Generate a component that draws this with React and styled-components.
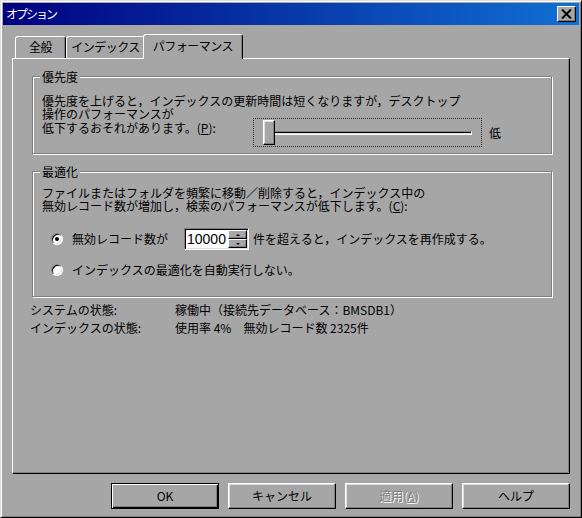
import React from 'react'
import styled, { createGlobalStyle } from 'styled-components'

const face = '#a6a6a6'

const GlobalStyle = createGlobalStyle`
  html, body {
    margin: 0;
    padding: 0;
    background: ${face};
  }
  body {
    font-family: "Noto Sans CJK JP", "Noto Sans", sans-serif;
    font-size: 12px;
    color: #000;
  }
`

const Window = styled.div`
  box-sizing: border-box;
  width: 582px;
  height: 518px;
  background: ${face};
  border: 1px solid;
  border-color: #dfdfdf #000 #000 #dfdfdf;
  box-shadow: inset 1px 1px #fff, inset -1px -1px #808080;
  padding: 2px;
  display: flex;
  flex-direction: column;
`
const TitleBar = styled.div`
  height: 22px;
  display: flex;
  align-items: center;
  justify-content: space-between;
  padding: 0 3px 0 3px;
  background: linear-gradient(to right, #000080, #1070d4);
`
const TitleText = styled.span`
  color: #fff;
  font-size: 12px;
  letter-spacing: -2px;
  line-height: 14px;
`
const CloseButton = styled.div`
  box-sizing: border-box;
  width: 19px;
  height: 16px;
  display: flex;
  align-items: center;
  justify-content: center;
  background: ${face};
  border: 1px solid;
  border-color: #fff #000 #000 #fff;
  box-shadow: inset -1px -1px #808080;
`
const Body = styled.div`
  flex: 1;
  display: flex;
  flex-direction: column;
  padding: 9px 9px 0 9px;
`
const TabStrip = styled.div`
  height: 24px;
  display: flex;
  align-items: flex-end;
  padding-left: 3px;
`
const Tab = styled.div`
  box-sizing: border-box;
  width: ${p => p.$width}px;
  height: ${p => (p.$active ? 25 : 22)}px;
  margin-left: ${p => (p.$active ? -2 : 0)}px;
  margin-bottom: ${p => (p.$active ? -1 : 0)}px;
  position: relative;
  z-index: ${p => (p.$active ? 2 : 0)};
  background: ${face};
  border-left: 1px solid #fff;
  border-top: 1px solid #fff;
  border-right: 1px solid #000;
  border-radius: 3px 3px 0 0;
  box-shadow: inset -1px 0 #808080;
  display: flex;
  align-items: center;
  justify-content: center;
  padding-bottom: ${p => (p.$active ? 3 : 1)}px;
  line-height: 14px;
  letter-spacing: -0.5px;
  white-space: nowrap;
`
const Panel = styled.div`
  box-sizing: border-box;
  height: 416px;
  border-left: 1px solid #fff;
  border-top: 1px solid #fff;
  border-right: 1px solid #000;
  border-bottom: 1px solid #000;
  box-shadow: inset -1px -1px #808080;
  padding: 17px 17px 0 19px;
  display: flex;
  flex-direction: column;
`
const Group = styled.div`
  position: relative;
  box-sizing: border-box;
  height: ${p => p.$height}px;
  margin-top: ${p => p.$top || 0}px;
  border: 1px solid #808080;
  box-shadow: 1px 1px #fff, inset 1px 1px #fff;
  padding: ${p => p.$padTop}px 9px 0 9px;
`
const GroupTitle = styled.span`
  position: absolute;
  top: -7px;
  left: 7px;
  padding: 0 2px;
  background: ${face};
  line-height: 14px;
`
const Line = styled.div`
  line-height: ${p => p.$lh || 13}px;
  white-space: nowrap;
`
const SliderRow = styled.div`
  display: flex;
  align-items: flex-start;
`
const SliderLabel = styled.div`
  width: 211px;
  line-height: 14px;
  white-space: nowrap;
`
const SliderFrame = styled.div`
  position: relative;
  box-sizing: border-box;
  width: 229px;
  height: 29px;
  margin-top: 11px;
  border: 1px dotted #303030;
  padding: 0 9px 0 9px;
  display: flex;
  align-items: center;
`
const Track = styled.div`
  flex: 1;
  box-sizing: border-box;
  height: 4px;
  border: 1px solid;
  border-color: #808080 #fff #fff #808080;
  box-shadow: inset 1px 1px #000, inset -1px -1px #dfdfdf;
`
const Thumb = styled.div`
  position: absolute;
  left: 9px;
  top: 1px;
  box-sizing: border-box;
  width: 12px;
  height: 25px;
  background: ${face};
  border: 1px solid;
  border-color: #fff #000 #000 #fff;
  box-shadow: inset -1px -1px #808080, inset 1px 1px #dfdfdf;
`
const LowLabel = styled.span`
  margin: 19px 0 0 7px;
  line-height: 13px;
`
const RadioRow = styled.div`
  height: 22px;
  margin-top: ${p => p.$top}px;
  padding-left: 9px;
  display: flex;
  align-items: center;
  white-space: nowrap;
`
const Radio = styled.span`
  box-sizing: border-box;
  width: 12px;
  height: 12px;
  border-radius: 50%;
  background: #fff;
  border: 1px solid;
  border-color: #808080 #fff #fff #808080;
  box-shadow: inset 1px 1px #000, inset -1px -1px #dfdfdf;
  display: flex;
  align-items: center;
  justify-content: center;
  margin-right: 9px;
  &::after {
    content: '';
    width: 4px;
    height: 4px;
    border-radius: 50%;
    background: ${p => (p.$checked ? '#000' : 'transparent')};
  }
`
const RadioLabel = styled.span`
  width: ${p => (p.$width ? `${p.$width}px` : 'auto')};
  line-height: 14px;
`
const Spinner = styled.div`
  box-sizing: border-box;
  width: 65px;
  height: 22px;
  display: flex;
  background: #fff;
  border: 1px solid;
  border-color: #808080 #fff #fff #808080;
  box-shadow: inset 1px 1px #000, inset -1px -1px #dfdfdf;
  padding: 1px;
  margin-right: 4px;
`
const SpinValue = styled.span`
  flex: 1;
  font-family: "Liberation Sans", Arial, sans-serif;
  font-size: 14px;
  line-height: 18px;
  padding-left: 1px;
`
const SpinButtons = styled.div`
  width: 19px;
  display: flex;
  flex-direction: column;
`
const SpinButton = styled.div`
  flex: 1;
  box-sizing: border-box;
  background: ${face};
  border: 1px solid;
  border-color: #fff #000 #000 #fff;
  box-shadow: inset -1px -1px #808080;
  display: flex;
  align-items: center;
  justify-content: center;
  &::after {
    content: '';
    border-left: 2px solid transparent;
    border-right: 2px solid transparent;
    ${p => (p.$up ? 'border-bottom: 2px solid #000;' : 'border-top: 2px solid #000;')}
  }
`
const Status = styled.div`
  margin: 4px 0 0 -2px;
  display: grid;
  grid-template-columns: 145px 1fr;
  line-height: 18px;
  white-space: nowrap;
`
const ButtonRow = styled.div`
  margin-top: 9px;
  display: flex;
  justify-content: flex-end;
  gap: 9px;
`
const Button = styled.div`
  box-sizing: border-box;
  width: 108px;
  height: 26px;
  display: flex;
  align-items: center;
  justify-content: center;
  line-height: 14px;
  background: ${face};
  border: 1px solid;
  border-color: ${p => (p.$default ? '#000' : '#fff #000 #000 #fff')};
  box-shadow: ${p =>
    p.$default
      ? 'inset 1px 1px #fff, inset -1px -1px #000, inset -2px -2px #808080'
      : 'inset -1px -1px #808080, inset 1px 1px #dfdfdf'};
  color: ${p => (p.$disabled ? '#808080' : '#000')};
  text-shadow: ${p => (p.$disabled ? '1px 1px #fff' : 'none')};
`

const CloseIcon = () => (
  <svg width='11' height='10' viewBox='0 0 11 10'>
    <path d='M1 0.5 L10 9.5 M10 0.5 L1 9.5' stroke='#000' strokeWidth='2' />
  </svg>
)

const App = () => (
  <Window>
    <GlobalStyle />
    <TitleBar>
      <TitleText>オプション</TitleText>
      <CloseButton>
        <CloseIcon />
      </CloseButton>
    </TitleBar>
    <Body>
      <TabStrip>
        <Tab $width={51}>全般</Tab>
        <Tab $width={79}>インデックス</Tab>
        <Tab $width={100} $active>
          パフォーマンス
        </Tab>
      </TabStrip>
      <Panel>
        <Group $height={78} $padTop={17}>
          <GroupTitle>優先度</GroupTitle>
          <Line>優先度を上げると，インデックスの更新時間は短くなりますが，デスクトップ</Line>
          <SliderRow>
            <SliderLabel>
              操作のパフォーマンスが
              <br />
              低下するおそれがあります。(<u>P</u>):
            </SliderLabel>
            <SliderFrame>
              <Track />
              <Thumb />
            </SliderFrame>
            <LowLabel>低</LowLabel>
          </SliderRow>
        </Group>
        <Group $height={126} $padTop={14} $top={17}>
          <GroupTitle>最適化</GroupTitle>
          <Line>ファイルまたはフォルダを頻繁に移動／削除すると，インデックス中の</Line>
          <Line>無効レコード数が増加し，検索のパフォーマンスが低下します。(<u>C</u>):</Line>
          <RadioRow $top={16}>
            <Radio $checked />
            <RadioLabel $width={112}>無効レコード数が</RadioLabel>
            <Spinner>
              <SpinValue>10000</SpinValue>
              <SpinButtons>
                <SpinButton $up />
                <SpinButton />
              </SpinButtons>
            </Spinner>
            <RadioLabel>件を超えると，インデックスを再作成する。</RadioLabel>
          </RadioRow>
          <RadioRow $top={9}>
            <Radio />
            <RadioLabel>インデックスの最適化を自動実行しない。</RadioLabel>
          </RadioRow>
        </Group>
        <Status>
          <span>システムの状態:</span>
          <span>稼働中（接続先データベース：BMSDB1）</span>
          <span>インデックスの状態:</span>
          <span>使用率 4%　無効レコード数 2325件</span>
        </Status>
      </Panel>
      <ButtonRow>
        <Button $default>OK</Button>
        <Button>キャンセル</Button>
        <Button $disabled>
          適用(<u>A</u>)
        </Button>
        <Button>ヘルプ</Button>
      </ButtonRow>
    </Body>
  </Window>
)

export default App
